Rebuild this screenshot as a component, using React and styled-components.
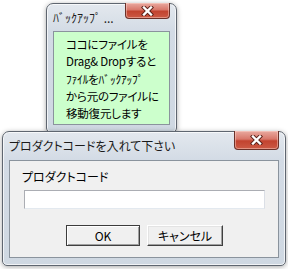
import styled, { createGlobalStyle } from "styled-components";

const GlobalStyle = createGlobalStyle`
  html, body {
    margin: 0;
    padding: 0;
    background: #ffffff;
  }
  body {
    font-family: "Noto Sans CJK JP", "Noto Sans", sans-serif;
    color: #000000;
  }
`;

const Desktop = styled.div`
  position: relative;
  width: 288px;
  height: 269px;
  overflow: hidden;
  background: #ffffff;
`;

const Window = styled.div`
  position: absolute;
  left: ${(p) => p.x}px;
  top: ${(p) => p.y}px;
  width: ${(p) => p.w}px;
  height: ${(p) => p.h}px;
  box-sizing: border-box;
  display: flex;
  flex-direction: column;
  padding: 0 6px 7px 6px;
  border: 1px solid #5f6670;
  border-radius: 7px 7px 5px 5px;
  background: linear-gradient(#e3e8ee 0px, #d3dbe5 28px, #cfd8e2 100%);
  box-shadow: 0 1px 5px rgba(0, 0, 0, 0.35), inset 0 0 0 1px rgba(255, 255, 255, 0.7);
`;

const TitleBar = styled.div`
  display: flex;
  justify-content: space-between;
  align-items: flex-start;
  height: ${(p) => p.h}px;
  flex-shrink: 0;
`;

const Title = styled.span`
  font-size: 12px;
  line-height: 14px;
  margin-top: ${(p) => p.top}px;
  color: #1b1b1b;
  white-space: nowrap;
  font-feature-settings: "palt";
`;

const CloseButton = styled.div`
  width: 45px;
  height: ${(p) => p.h}px;
  margin-top: -1px;
  box-sizing: border-box;
  display: flex;
  align-items: center;
  justify-content: center;
  border: 1px solid #6b3129;
  border-top: none;
  border-radius: 0 0 4px 4px;
  background: linear-gradient(#e9aaa0 0%, #d8776a 45%, #c2432f 55%, #cc5a45 100%);
  box-shadow: inset 0 0 0 1px rgba(255, 220, 210, 0.45);
`;

const Client = styled.div`
  flex: 1;
  box-sizing: border-box;
  border: 1px solid #8a939d;
  background: ${(p) => p.bg};
`;

const NoteBody = styled.div`
  padding: 4px 0 0 12px;
  font-size: 11.5px;
  line-height: 17.3px;
  font-feature-settings: "palt";
  letter-spacing: -0.2px;
`;

const DialogBody = styled.div`
  display: flex;
  flex-direction: column;
  padding: 8px 12px 0 12px;
`;

const Label = styled.div`
  font-size: 12px;
  line-height: 15px;
  font-feature-settings: "palt";
`;

const Input = styled.div`
  height: 19px;
  margin: 6px 1px 0 2px;
  box-sizing: border-box;
  background: #ffffff;
  border: 1px solid #abadb3;
  border-bottom-color: #e3e9ef;
  border-right-color: #dbdfe6;
`;

const ButtonRow = styled.div`
  display: flex;
  justify-content: center;
  gap: 7px;
  margin-top: 16px;
  padding-left: 1px;
`;

const Button = styled.div`
  width: ${(p) => p.w}px;
  height: 21px;
  box-sizing: border-box;
  display: flex;
  align-items: center;
  justify-content: center;
  font-size: 12px;
  font-feature-settings: "palt";
  background: #f0f0f0;
  border: 1px solid ${(p) => (p.$default ? "#3c3c3c" : "#ffffff")};
  border-right-color: #404040;
  border-bottom-color: #404040;
  box-shadow: ${(p) =>
    p.$default
      ? "inset 1px 1px 0 #ffffff, inset -1px -1px 0 #a0a0a0"
      : "inset -1px -1px 0 #a0a0a0, inset 1px 1px 0 #e3e3e3"};
`;

const CloseGlyph = () => (
  <svg width="13" height="10" viewBox="0 0 13 10">
    <path d="M3 1.5 L10 8.5 M10 1.5 L3 8.5" stroke="#5a2119" strokeWidth="4.2" strokeLinecap="square" />
    <path d="M3 1.5 L10 8.5 M10 1.5 L3 8.5" stroke="#ffffff" strokeWidth="2.4" strokeLinecap="square" />
  </svg>
);

export default function App() {
  return (
    <>
      <GlobalStyle />
      <Desktop>
        <Window x={46} y={3} w={131} h={130}>
          <TitleBar h={27}>
            <Title top={7}>ﾊﾞｯｸｱｯﾌﾟ ...</Title>
            <CloseButton h={16}>
              <CloseGlyph />
            </CloseButton>
          </TitleBar>
          <Client bg="#ccffcc">
            <NoteBody>
              <div>ココにファイルを</div>
              <div>Drag&amp; Dropすると</div>
              <div>ﾌｧｲﾙをﾊﾞｯｸｱｯﾌﾟ</div>
              <div>から元のファイルに</div>
              <div>移動復元します</div>
            </NoteBody>
          </Client>
        </Window>

        <Window x={2} y={131} w={284} h={135}>
          <TitleBar h={28}>
            <Title top={7}>プロダクトコードを入れて下さい</Title>
            <CloseButton h={19}>
              <CloseGlyph />
            </CloseButton>
          </TitleBar>
          <Client bg="#f0f0f0">
            <DialogBody>
              <Label>プロダクトコード</Label>
              <Input />
              <ButtonRow>
                <Button w={74} $default>OK</Button>
                <Button w={76}>キャンセル</Button>
              </ButtonRow>
            </DialogBody>
          </Client>
        </Window>
      </Desktop>
    </>
  );
}
